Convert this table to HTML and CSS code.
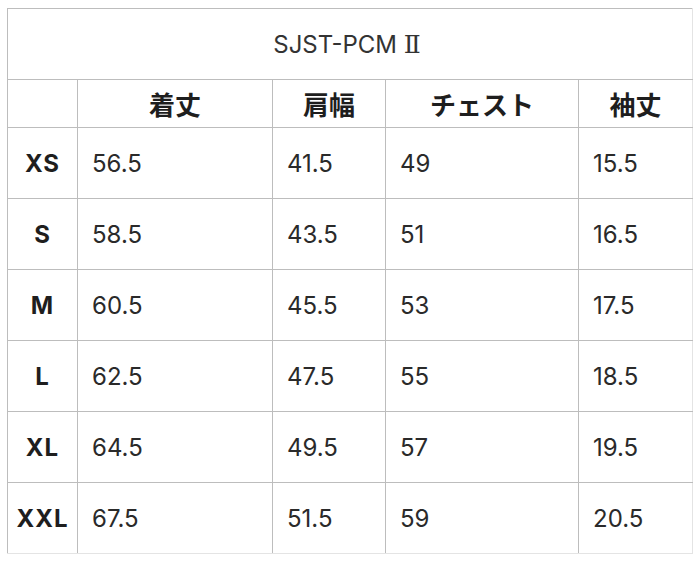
FILE: index.html
```
<!DOCTYPE html>
<html lang="ja">
<head>
<meta charset="utf-8">
<link rel="stylesheet" href="styles.css">
</head>
<body>
<table class="size-table">
  <colgroup>
    <col class="c0"><col class="c1"><col class="c2"><col class="c3"><col class="c4">
  </colgroup>
  <tr class="title-row"><td colspan="5" class="title">SJST-PCM <span class="roman">Ⅱ</span></td></tr>
  <tr class="head-row">
    <th></th><th>着丈</th><th>肩幅</th><th>チェスト</th><th>袖丈</th>
  </tr>
  <tr><th class="size">XS</th><td>56.5</td><td>41.5</td><td>49</td><td>15.5</td></tr>
  <tr><th class="size">S</th><td>58.5</td><td>43.5</td><td>51</td><td>16.5</td></tr>
  <tr><th class="size">M</th><td>60.5</td><td>45.5</td><td>53</td><td>17.5</td></tr>
  <tr><th class="size">L</th><td>62.5</td><td>47.5</td><td>55</td><td>18.5</td></tr>
  <tr><th class="size">XL</th><td>64.5</td><td>49.5</td><td>57</td><td>19.5</td></tr>
  <tr class="last"><th class="size">XXL</th><td>67.5</td><td>51.5</td><td>59</td><td>20.5</td></tr>
</table>
</body>
</html>
```
FILE: styles.css
```
html, body {
  margin: 0;
  padding: 0;
  background: #fff;
}
body {
  padding: 8px 0 0 7px;
  font-family: Inter, "Noto Sans CJK JP", sans-serif;
  color: #2a2a2a;
}
.size-table {
  border-collapse: collapse;
  table-layout: fixed;
  width: 685px;
}
.c0 { width: 70px; }
.c1 { width: 195px; }
.c2 { width: 113px; }
.c3 { width: 193px; }
.c4 { width: 114px; }
.size-table td, .size-table th {
  border: 1px solid #bdbdbd;
  padding: 0 0 0 14px;
  height: 71px;
  font-size: 24px;
  font-weight: 400;
  text-align: left;
  vertical-align: middle;
  box-sizing: border-box;
}
.size-table tr > :last-child {
  border-right-color: #e4e4e4;
}
.size-table tr.last > * {
  border-bottom-color: #e4e4e4;
}
.size-table td.title {
  text-align: center;
  padding: 0 6px 0 0;
  color: #333;
}
.roman {
  font-family: "DejaVu Serif", "DejaVu Sans", serif;
  font-size: 25px;
  line-height: 1;
}
.head-row th {
  height: 48px;
  padding: 0;
  text-align: center;
  font-family: "Noto Sans CJK JP", sans-serif;
  font-weight: 700;
  font-size: 26px;
  color: #1e1e1e;
}
.size-table th.size {
  padding: 0;
  text-align: center;
  font-weight: 700;
  font-size: 24px;
  letter-spacing: 1px;
  color: #1e1e1e;
}
```
